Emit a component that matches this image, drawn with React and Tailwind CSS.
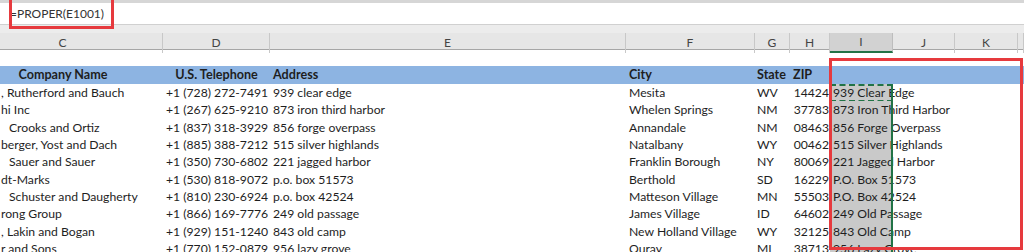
import React from 'react';

const cols = 'grid grid-cols-[200px_107px_356px_129px_35px_40px_63px_62px_63px_1fr]';

const letters = ['C', 'D', 'E', 'F', 'G', 'H', 'I', 'J', 'K', ''];

// visible part of each row; company names are cut off by the left edge
const rows = [
  { c: ', Rutherford and Bauch', deep: false, d: '+1 (728) 272-7491', e: '939 clear edge', f: 'Mesita', g: 'WV', h: '14424', i: '939 Clear Edge' },
  { c: 'hi Inc', deep: false, d: '+1 (267) 625-9210', e: '873 iron third harbor', f: 'Whelen Springs', g: 'NM', h: '37783', i: '873 Iron Third Harbor' },
  { c: 'Crooks and Ortiz', deep: true, d: '+1 (837) 318-3929', e: '856 forge overpass', f: 'Annandale', g: 'NM', h: '08463', i: '856 Forge Overpass' },
  { c: 'berger, Yost and Dach', deep: false, d: '+1 (885) 388-7212', e: '515 silver highlands', f: 'Natalbany', g: 'WY', h: '00462', i: '515 Silver Highlands' },
  { c: 'Sauer and Sauer', deep: true, d: '+1 (350) 730-6802', e: '221 jagged harbor', f: 'Franklin Borough', g: 'NY', h: '80069', i: '221 Jagged Harbor' },
  { c: 'dt-Marks', deep: false, d: '+1 (530) 818-9072', e: 'p.o. box 51573', f: 'Berthold', g: 'SD', h: '16229', i: 'P.O. Box 51573' },
  { c: 'Schuster and Daugherty', deep: true, d: '+1 (810) 230-6924', e: 'p.o. box 42524', f: 'Matteson Village', g: 'MN', h: '55503', i: 'P.O. Box 42524' },
  { c: 'rong Group', deep: false, d: '+1 (866) 169-7776', e: '249 old passage', f: 'James Village', g: 'ID', h: '64602', i: '249 Old Passage' },
  { c: ', Lakin and Bogan', deep: false, d: '+1 (929) 151-1240', e: '843 old camp', f: 'New Holland Village', g: 'WY', h: '32125', i: '843 Old Camp' },
  { c: 'r and Sons', deep: false, d: '+1 (770) 152-0879', e: '956 lazy grove', f: 'Ouray', g: 'MI', h: '38713', i: '956 Lazy Grove' },
];

export default function App() {
  return (
    <div className="relative w-[1024px] h-[252px] overflow-hidden bg-white text-[#1e1e1e] font-['Lato',sans-serif]">
      {/* formula bar */}
      <div className="h-[3px] bg-[#d6d6d6]" />
      <div className="h-[21px] flex items-center pl-[10px] text-[12px] text-[#333]">=PROPER(E1001)</div>
      <div className="h-[9px] bg-[#ececec] border-t border-[#d0d0d0]" />

      <div className="ml-[-37px] w-[1061px]">
        {/* column letters */}
        <div className={`${cols} h-[17px] bg-[#e6e6e6] border-b border-[#a6a6a6] text-[12px] text-[#444]`}>
          {letters.map((l) =>
            l === 'I' ? (
              <div key={l} className="flex items-center justify-center bg-[#d2d2d2] border-r border-[#bdbdbd] border-b-2 border-b-[#217346]">
                {l}
              </div>
            ) : (
              <div key={l || 'L'} className="flex items-center justify-center border-r border-[#c8c8c8]">
                {l}
              </div>
            )
          )}
        </div>

        {/* row 1 empty */}
        <div className="h-[16px]" />

        {/* table header */}
        <div className={`${cols} h-[18px] items-center bg-[#8db4e2] font-bold text-[12.6px] whitespace-nowrap`}>
          <div className="text-center">Company Name</div>
          <div className="text-center">U.S. Telephone</div>
          <div className="pl-[3px]">Address</div>
          <div className="pl-[3px]">City</div>
          <div className="pl-[2px]">State</div>
          <div className="pl-[3px]">ZIP</div>
          <div />
          <div />
          <div />
          <div />
        </div>

        {/* data */}
        {rows.map((r, idx) => (
          <div key={idx} className={`${cols} h-[17.33px] text-[12.2px] whitespace-nowrap`}>
            <div className={`${r.deep ? 'pl-[46px]' : 'pl-[38px]'} flex items-center overflow-hidden`}>{r.c}</div>
            <div className="pl-[3px] flex items-center overflow-hidden">{r.d}</div>
            <div className="pl-[3px] flex items-center overflow-hidden">{r.e}</div>
            <div className="pl-[3px] flex items-center overflow-hidden">{r.f}</div>
            <div className="pl-[2px] flex items-center overflow-hidden">{r.g}</div>
            <div className="pr-[1px] flex items-center justify-end overflow-hidden">{r.h}</div>
            <div className="relative pl-[3px] flex items-center bg-[#c9c9c9]">
              {r.i}
              {idx === 0 && <div className="absolute inset-0 border-2 border-dashed border-[#217346]" />}
            </div>
            <div />
            <div />
            <div />
          </div>
        ))}
      </div>

      {/* selection edge */}
      <div className="absolute left-[891px] top-[84px] w-[2px] h-[170px] bg-[#217346]" />

      {/* red annotation boxes */}
      <div className="absolute left-[9px] top-[-4px] w-[105px] h-[33px] border-[3px] border-[#e63a3e]" />
      <div className="absolute left-[829px] top-[58px] w-[194px] h-[192px] border-[3px] border-[#e63a3e]" />
    </div>
  );
}
